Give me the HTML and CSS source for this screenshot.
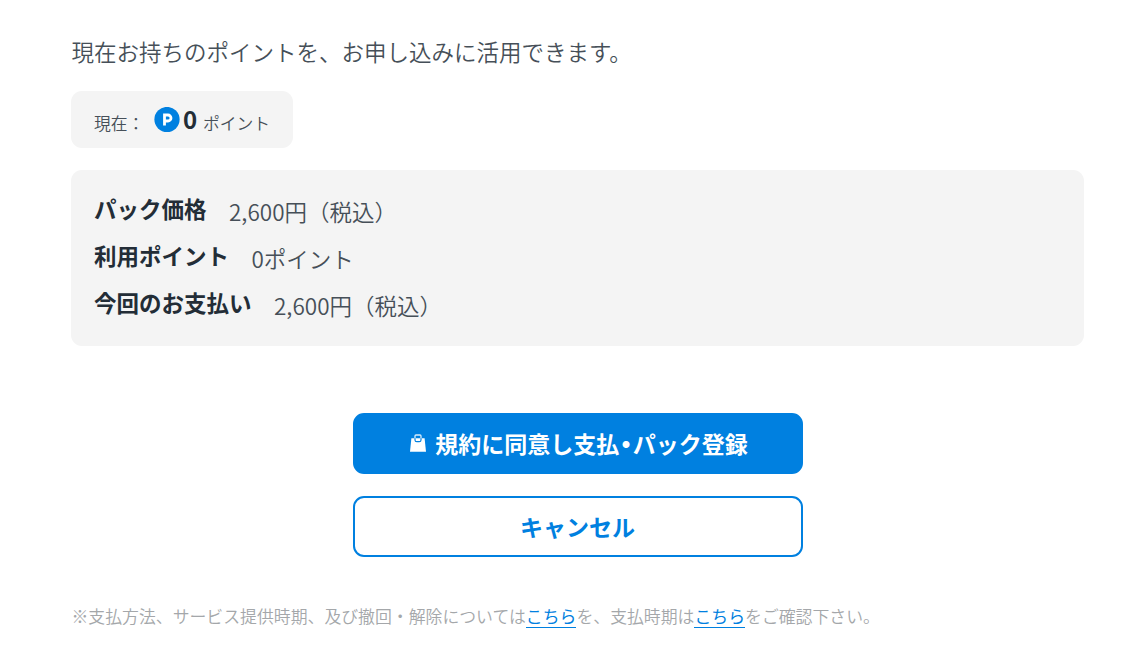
FILE: index.html
```html
<!DOCTYPE html>
<html lang="ja">
<head>
    <meta charset="UTF-8">
    <meta name="viewport" content="width=device-width, initial-scale=1.0">
    <title>お支払いの確認</title>

    <link rel="stylesheet" href="styles.css">
</head>
<body>
    <div class="container">
        <p class="lead">現在お持ちのポイントを、お申し込みに活用できます。</p>
        <div class="point-box">
            <span class="label">現在：</span>
            <svg class="point-icon" viewBox="0 0 26 26">
                <circle cx="13" cy="12.5" r="12.6" fill="#0080e0"/>
                <path d="M10.5 18.5V8h3.5a2.7 2.7 0 0 1 0 6h-3.5" fill="none" stroke="#fff" stroke-width="2.8"/>
            </svg>
            <strong class="point">0</strong>
            <span class="unit">ポイント</span>
        </div>
        <dl class="price-box">
            <div class="row">
                <dt>パック価格</dt>
                <dd>2,600円（税込）</dd>
            </div>
            <div class="row">
                <dt>利用ポイント</dt>
                <dd>0ポイント</dd>
            </div>
            <div class="row">
                <dt>今回のお支払い</dt>
                <dd>2,600円（税込）</dd>
            </div>
        </dl>
        <div class="buttons">
            <button class="btn btn-primary">
                <svg class="bag-icon" viewBox="0 0 18 20">
                    <path d="M2.4 5.3h13.2L17 18.8H1z" fill="#fff"/>
                    <path d="M6 5.3V3q0-1 1-1h4q1 0 1 1v2.3" fill="none" stroke="#fff" stroke-opacity=".85" stroke-width="1.3"/>
                    <path d="M6 5.3v1.6q0 1.8 1.8 1.8h2.4q1.8 0 1.8-1.8V5.3" fill="none" stroke="#0080e0" stroke-width="1.2"/>
                </svg>
                <span>規約に同意し支払<span class="dot">・</span>パック登録</span>
            </button>
            <button class="btn btn-cancel">キャンセル</button>
        </div>
        <p class="note">※支払方法、サービス提供時期、及び撤回・解除については<a href="#">こちら</a>を、支払時期は<a href="#">こちら</a>をご確認下さい。</p>
    </div>
</body>
</html>
```
FILE: styles.css
```css
*{
    margin: 0px;
    padding: 0px;
    box-sizing: border-box;
}

body{
    font-family: "Noto Sans CJK JP",sans-serif;
    font-size: 22.5px;
    font-weight: 350;
    color: #464f58;
    background: #fff;
}

.container{
    width: 1013px;
    margin-left: 71px;
    padding-top: 31px;
}

.lead{
    padding-left: 0.5px;
    line-height: 40px;
}

.point-box{
    display: flex;
    align-items: center;
    width: 222px;
    height: 57px;
    margin-top: 20px;
    padding-left: 23px;
    background: #f4f4f4;
    border-radius: 11px;
}

.point-box .label,
.point-box .unit{
    padding-top: 7px;
    font-size: 16.8px;
    line-height: 24px;
}

.point-box .label{
    width: 60px;
}

.point-icon{
    width: 26px;
    height: 26px;
}

.point-box .point{
    width: 14px;
    margin: 0px 6px 1px 3px;
    font-size: 24px;
    font-weight: bold;
    line-height: 32px;
    color: #232d37;
}

.price-box{
    height: 176px;
    margin-top: 22px;
    padding: 15px 23px;
    background: #f4f4f4;
    border-radius: 11px;
}

.price-box .row{
    display: flex;
    height: 47px;
    line-height: 47px;
}

.price-box dt{
    margin-right: 22.5px;
    font-weight: bold;
    color: #232d37;
}

.price-box dd{
    padding-top: 3px;
}

.buttons{
    display: flex;
    flex-direction: column;
    align-items: center;
    gap: 22px;
    margin-top: 67px;
}

.btn{
    display: flex;
    align-items: center;
    justify-content: center;
    width: 450px;
    height: 61px;
    padding-bottom: 2px;
    border: 2px solid #0080e0;
    border-radius: 11px;
    font-family: inherit;
    font-size: 23px;
    font-weight: bold;
    cursor: pointer;
}

.btn-primary{
    padding-left: 2px;
    background: #0080e0;
    color: #fff;
}

.btn-primary .dot{
    font-size: 27px;
    line-height: 1;
    vertical-align: -2px;
    font-feature-settings: "halt";
}

.btn-cancel{
    background: #fff;
    color: #0080e0;
}

.bag-icon{
    width: 18px;
    height: 20px;
    margin-right: 8px;
}

.note{
    margin-top: 43px;
    padding-left: 0.5px;
    font-size: 16.875px;
    line-height: 32px;
    color: #a4a7aa;
}

.note a{
    display: inline-block;
    line-height: 22px;
    font-weight: 400;
    color: #0080e0;
    text-decoration: none;
    border-bottom: 1px solid #0080e0;
}
```
